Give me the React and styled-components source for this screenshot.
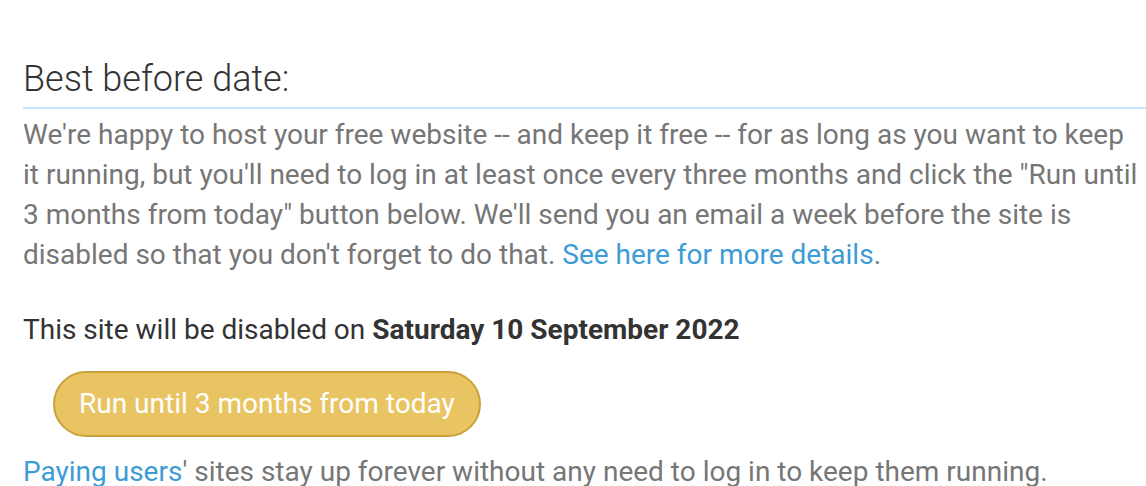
import React from 'react';
import styled, { createGlobalStyle } from 'styled-components';

const GlobalStyle = createGlobalStyle`
    body {
        margin: 0;
        background: #ffffff;
        font-family: Roboto, "Liberation Sans", sans-serif;
    }
`;

const Page = styled.div`
    padding: 54px 0 0 23px;
    overflow: hidden;
    height: 486px;
    box-sizing: border-box;
`;

const Heading = styled.h2`
    margin: 0 0 6px 0;
    font-size: 36px;
    font-weight: 300;
    color: #333333;
    line-height: 50px;
    padding-bottom: 3px;
    border-bottom: 2px solid #c4e8fa;
`;

const Text = styled.p`
    margin: 0;
    font-size: 28px;
    line-height: 40px;
    color: ${props => props.dark ? '#333333' : '#767676'};
    padding-right: 6px;
`;

const Spaced = styled(Text)`
    margin-top: 35px;
`;

const Link = styled.a`
    color: #3d9bd6;
    text-decoration: none;
`;

const ButtonRow = styled.div`
    padding: 21px 0 15px 30px;
`;

const RunButton = styled.button`
    font-family: inherit;
    font-size: 28px;
    line-height: 32px;
    color: #ffffff;
    background: #e9c462;
    border: 2px solid #c9a03c;
    border-radius: 34px;
    padding: 15px 24px;
    cursor: pointer;
`;

const App = () => {
    return (
        <Page>
            <GlobalStyle />
            <Heading>Best before date:</Heading>
            <Text>
                We're happy to host your free website -- and keep it free -- for as long as you want to keep
                it running, but you'll need to log in at least once every three months and click the "Run until
                3 months from today" button below. We'll send you an email a week before the site is
                disabled so that you don't forget to do that. <Link href="#">See here for more details</Link>.
            </Text>
            <Spaced dark>
                This site will be disabled on <b>Saturday 10 September 2022</b>
            </Spaced>
            <ButtonRow>
                <RunButton>Run until 3 months from today</RunButton>
            </ButtonRow>
            <Text>
                <Link href="#">Paying users</Link>' sites stay up forever without any need to log in to keep them running.
            </Text>
        </Page>
    );
};

export default App;
